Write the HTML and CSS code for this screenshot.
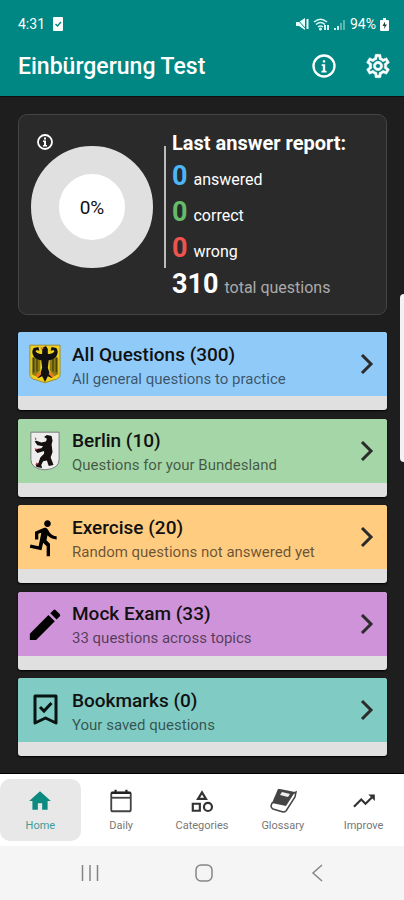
FILE: index.html
```html
<!DOCTYPE html>
<html lang="en">
<head>
<meta charset="utf-8">
<meta name="viewport" content="width=device-width, initial-scale=1">
<title>Einbürgerung Test</title>
<link rel="stylesheet" href="styles.css">
</head>
<body>
<div class="app">
  <header class="top">
    <div class="status">
      <span class="clock">4:31</span>
      <svg width="10" height="14" viewBox="0 0 10 14"><rect width="10" height="14" rx="1" fill="#fff"/><path d="M2.500 7l2 2 3.500-4" fill="none" stroke="#008783" stroke-width="1.500"/></svg>
      <span class="status-icons">
        <svg width="13" height="12" viewBox="0 0 13 12" fill="#e8ffff"><path d="M0 4h3l6-4v12L3 8H0zM10.500 1h2v10h-2z"/><path d="M1 1l9 10" stroke="#008783"/></svg>
        <svg width="17" height="13" viewBox="0 0 17 13" fill="none" stroke="#d5f5f3" stroke-width="1.500"><path d="M1 4q6.500-5.500 13 0M3 6.500q4.500-4 9 0M5 9q2.500-2 5 0"/><path d="M12 7v5M15 7v5" stroke-width="2"/><circle cx="7.500" cy="11" r=".8"/></svg>
        <svg width="12" height="11" viewBox="0 0 12 11" fill="#c9efed"><path d="M0 9h2v2H0zM3 7h2v4H3z"/><path d="M6 4h2v7H6zM9 1h2v10H9z" opacity=".45"/></svg>
        <span class="battery">94%</span>
        <svg width="9" height="13" viewBox="0 0 9 13"><path d="M3 0h3v2h2q1 0 1 1v9q0 1-1 1H1q-1 0-1-1V3q0-1 1-1h2z" fill="#fff"/><path d="M5 3.500L2.500 8h2L4 11l3-4.500H5z" fill="#24403f"/></svg>
      </span>
    </div>
    <div class="bar">
      <h1>Einbürgerung Test</h1>
      <button class="icon-btn" aria-label="Information"><svg width="28" height="28" viewBox="0 0 24 24" fill="#fff"><path d="M11 7h2v2h-2zM10 10.500h3V16h1.200v1.500H9.800V16H11v-4h-1zM12 2a10 10 0 100 20 10 10 0 000-20zm0 18a8 8 0 110-16 8 8 0 010 16z"/></svg></button>
      <button class="icon-btn" aria-label="Settings"><svg width="28" height="28" viewBox="0 0 24 24" fill="#fff" stroke="#fff" stroke-width=".4"><path d="M19.430 12.980c.04-.32.07-.64.07-.98s-.03-.66-.07-.98l2.110-1.650c.19-.15.24-.42.12-.64l-2-3.460c-.12-.22-.39-.3-.61-.22l-2.490 1c-.52-.4-1.080-.73-1.690-.98l-.38-2.650C14.460 2.180 14.250 2 14 2h-4c-.25 0-.46.18-.49.42l-.38 2.650c-.61.25-1.170.59-1.690.98l-2.490-1c-.23-.09-.49 0-.61.22l-2 3.460c-.13.22-.07.49.12.64l2.110 1.650c-.04.32-.07.65-.07.98s.03.66.07.98l-2.110 1.650c-.19.15-.24.42-.12.64l2 3.460c.12.22.39.3.61.22l2.490-1c.52.4 1.080.73 1.690.98l.38 2.650c.03.24.24.42.49.42h4c.25 0 .46-.18.49-.42l.38-2.650c.61-.25 1.170-.59 1.690-.98l2.490 1c.23.09.49 0 .61-.22l2-3.460c.12-.22.07-.49-.12-.64zm-1.980-1.710c.04.31.05.52.05.73s-.02.43-.05.73l-.14 1.130.89.7 1.080.84-.7 1.210-1.270-.51-1.040-.42-.9.68c-.43.32-.84.56-1.250.73l-1.060.43-.16 1.130-.2 1.350h-1.400l-.19-1.350-.16-1.130-1.060-.43c-.43-.18-.83-.41-1.230-.71l-.91-.7-1.060.43-1.270.51-.7-1.210 1.080-.84.89-.7-.14-1.130c-.03-.31-.05-.54-.05-.74s.02-.43.05-.73l.14-1.130-.89-.7-1.080-.84.7-1.210 1.270.51 1.040.42.9-.68c.43-.32.84-.56 1.250-.73l1.060-.43.16-1.130.2-1.350h1.390l.19 1.350.16 1.130 1.060.43c.43.18.83.41 1.230.71l.91.7 1.060-.43 1.270-.51.7 1.210-1.070.85-.89.7zM12 8a4 4 0 100 8 4 4 0 000-8zm0 6a2 2 0 110-4 2 2 0 010 4z"/></svg></button>
    </div>
  </header>

  <main>
    <section class="report">
      <div class="progress">
        <button class="hint" aria-label="About progress"><svg width="18" height="18" viewBox="0 0 18 18"><circle cx="9" cy="9" r="7" fill="none" stroke="#fff" stroke-width="1.800"/><path d="M8 4.500h2v2H8zM7 7.500h3V12h1v1.500H7V12h1V9H7z" fill="#fff"/></svg></button>
        <div class="donut"><span>0%</span></div>
      </div>
      <div class="stats">
        <h2>Last answer report:</h2>
        <p><b class="blue">0</b> answered</p>
        <p><b class="green">0</b> correct</p>
        <p><b class="red">0</b> wrong</p>
        <p class="total"><b>310</b> total questions</p>
      </div>
    </section>

    <nav class="list" aria-label="Question sets">
      <a href="#all" class="item">
        <span class="body sky">
          <svg class="lead" viewBox="0 0 34 42"><path d="M1 1h32v31q0 5-7 6l-9 3-9-3q-7-1-7-6z" fill="#efd01f" stroke="#9a8a2a"/><path d="M3 14h9v14l-5 6-4-2zM31 14h-9v14l5 6 4-2z" fill="#8d7d16"/><path d="M5 14v16M8.500 15v14M25.500 15v14M29 14v16" stroke="#4c430b" stroke-width="1.500"/><path d="M14 4l4-2 2 3v5q4 1 7-2l-1-2-3 1 1-4 5 1q3 4 0 9-4 4-8 4l-1 8 2 6 4 3-2 2-4-2-3 6-3-6-4 2-2-2 4-3 2-6-1-8q-4 0-8-4-3-5 0-9l5-1 1 4-3-1-1 2q3 3 7 2V6z" fill="#111"/><path d="M12 3l4 1-3 2zM7 33l5-4 1 3-4 4zM27 33l-5-4-1 3 4 4z" fill="#ee7a1b"/></svg>
          <span class="text"><strong>All Questions (300)</strong><small>All general questions to practice</small></span>
          <svg class="chev" viewBox="0 0 14 20"><path d="M2 1l9 9-9 9"/></svg>
        </span>
      </a>
      <a href="#berlin" class="item">
        <span class="body mint">
          <svg class="lead" viewBox="0 0 34 42"><path d="M2 1h30v29q0 10-15 11Q2 40 2 30z" fill="#eee" stroke="#777"/><path d="M16 6l3-2 5 1 1 5-1 4 1 8-2 6 2 5 1 3-5 1-2-6-4 1-2 4 1 3-6-1-1-3 3-1 2-6 4-4v-3l-7 2-3-3 2-1 5-1 2-2-6-1-3-4 2-1 5 2 5-1 1-3z" fill="#15100f"/><path d="M6 6l2 2-1 2zM6 18l3 1-2 2zM8 33l2 2-3 1z" fill="#cb332e"/></svg>
          <span class="text"><strong>Berlin (10)</strong><small>Questions for your Bundesland</small></span>
          <svg class="chev" viewBox="0 0 14 20"><path d="M2 1l9 9-9 9"/></svg>
        </span>
      </a>
      <a href="#exercise" class="item">
        <span class="body amber">
          <svg class="lead" viewBox="3 -.5 18 24"><path d="M13.490 5.480c1.100 0 2-.9 2-2s-.9-2-2-2-2 .9-2 2 .9 2 2 2zm-3.600 13.900l1-4.400 2.100 2v6h2v-7.500l-2.100-2 .6-3c1.300 1.500 3.300 2.500 5.500 2.500v-2c-1.900 0-3.500-1-4.300-2.400l-1-1.600c-.4-.6-1-1-1.700-1-.3 0-.5.1-.8.1l-5.200 2.200v4.700h2v-3.400l1.800-.7-1.600 8.100-4.900-1-.4 2 7 1.400z"/></svg>
          <span class="text"><strong>Exercise (20)</strong><small>Random questions not answered yet</small></span>
          <svg class="chev" viewBox="0 0 14 20"><path d="M2 1l9 9-9 9"/></svg>
        </span>
      </a>
      <a href="#mock" class="item">
        <span class="body violet">
          <svg class="lead" viewBox="2.500 2 19 19"><path d="M3 17.250V21h3.750L17.810 9.940l-3.750-3.750L3 17.250zM20.710 7.040a1 1 0 000-1.410l-2.340-2.340a1 1 0 00-1.410 0l-1.830 1.830 3.750 3.750 1.830-1.830z"/></svg>
          <span class="text"><strong>Mock Exam (33)</strong><small>33 questions across topics</small></span>
          <svg class="chev" viewBox="0 0 14 20"><path d="M2 1l9 9-9 9"/></svg>
        </span>
      </a>
      <a href="#bookmarks" class="item">
        <span class="body teal">
          <svg class="lead" viewBox="0 0 32 40"><path d="M6 6h21v27l-10.500-5L6 33z" fill="none" stroke="#071412" stroke-width="3" stroke-linejoin="round"/><path d="M11 17l4 4 7.500-8" fill="none" stroke="#071412" stroke-width="3"/></svg>
          <span class="text"><strong>Bookmarks (0)</strong><small>Your saved questions</small></span>
          <svg class="chev" viewBox="0 0 14 20"><path d="M2 1l9 9-9 9"/></svg>
        </span>
      </a>
    </nav>
    <span class="edge-handle"></span>
  </main>

  <nav class="tabs" aria-label="Main">
    <a href="#home" class="active"><svg width="26" height="26" viewBox="0 0 24 24" fill="#0b8a80"><path d="M10 20v-6h4v6h5v-8h3L12 3 2 12h3v8z"/></svg>Home</a>
    <a href="#daily"><svg width="26" height="26" viewBox="0 0 24 24" fill="none" stroke="#444" stroke-width="1.700"><rect x="3" y="4" width="18" height="17.500" rx="1.500"/><path d="M3 9h18"/><path d="M3 4.500h18M7 1.500v4M17 1.500v4" stroke="#222" stroke-width="2"/></svg>Daily</a>
    <a href="#categories"><svg width="26" height="26" viewBox="0 0 24 24" fill="none" stroke="#333" stroke-width="2"><path d="M12 4l3.700 6H8.300z"/><path d="M3.500 14.500h6.500v6.500H3.500z"/><circle cx="17.500" cy="17.500" r="3.700"/></svg>Categories</a>
    <a href="#glossary"><svg width="30" height="26" viewBox="0 0 30 26"><path d="M4 15l-1 3q0 2 2 3l10 3q2 0 3-1l9-14 1-5z" fill="#fff" stroke="#444" stroke-width="1.500"/><path d="M10 1h2l15 3-9 14-14-3z" fill="#444"/><path d="M14 4l8 2-2 3-8-2z" fill="#eee"/></svg>Glossary</a>
    <a href="#improve"><svg width="26" height="26" viewBox="0 0 24 24" fill="#333"><path d="M16 6l2.290 2.290-4.880 4.880-4-4L2 16.590 3.410 18l6-6 4 4 6.300-6.290L22 12V6z"/></svg>Improve</a>
  </nav>

  <div class="system">
    <button aria-label="Recent apps"><svg width="18" height="18" viewBox="0 0 18 18"><path d="M1.500 1v16M9 1v16M16.500 1v16"/></svg></button>
    <button aria-label="Home screen"><svg width="18" height="18" viewBox="0 0 18 18"><rect x="1" y="1" width="16" height="16" rx="5"/></svg></button>
    <button aria-label="Back"><svg width="18" height="18" viewBox="0 0 18 18"><path d="M13 1L4 9l9 8"/></svg></button>
  </div>
</div>
</body>
</html>
```
FILE: styles.css
```css
* { box-sizing: border-box; }

body {
  margin: 0;
  background: #1e1e1e;
  font-family: Roboto, "Liberation Sans", sans-serif;
}

h1, h2, p { margin: 0; }
a { color: inherit; text-decoration: none; }
button { padding: 0; border: 0; background: none; }
svg { display: block; flex: none; }

.app {
  min-height: 100vh;
  display: flex;
  flex-direction: column;
}

.top {
  background: #008783;
  color: #fff;
  border-bottom: 1px solid #101010;
}

.status {
  height: 40px;
  padding: 8px 15px 0 18px;
  display: flex;
  align-items: center;
  gap: 8px;
  font-size: 14px;
  font-weight: 400;
}

.status-icons {
  margin-left: auto;
  display: flex;
  align-items: center;
  gap: 4px;
}

.bar {
  height: 56px;
  padding: 0 12px 4px 18px;
  display: flex;
  align-items: center;
  gap: 26px;
}

.bar h1 {
  flex: 1;
  font-size: 23px;
  font-weight: 500;
  white-space: nowrap;
}

main {
  position: relative;
  flex: 1;
  display: flex;
  flex-direction: column;
  gap: 17px;
  padding: 17px 17px 17px 18px;
  border-bottom: 1px solid #000;
}

.report {
  display: flex;
  min-height: 201px;
  padding: 12px;
  border: 1px solid #444;
  border-radius: 9px;
  background: #2a2a2a;
  color: #fff;
}

.progress {
  position: relative;
  display: flex;
  align-items: center;
  height: 122px;
  margin-top: 19px;
  padding-right: 11px;
  border-right: 2px solid #bbb;
}

.donut {
  width: 122px;
  height: 122px;
  border: 28px solid #e0e0e0;
  border-radius: 50%;
  background: #fff;
  color: #111;
  font-size: 19px;
  display: grid;
  place-items: center;
}

.hint {
  position: absolute;
  left: 5px;
  top: -13px;
}

.stats {
  padding: 3px 0 0 6px;
  white-space: nowrap;
}

.stats h2 {
  margin-bottom: 2px;
  font-size: 20px;
  line-height: 26px;
  font-weight: 700;
}

.stats p {
  height: 36px;
  line-height: 36px;
  font-size: 16px;
}

.stats b {
  font-size: 27px;
  font-weight: 700;
  margin-right: 2px;
}

.stats .total { color: #aaa; }
.total b { color: #fff; }
.blue { color: #4db5f5; }
.green { color: #66bb6a; }
.red { color: #ef5350; }

.list {
  flex: 1;
  display: flex;
  flex-direction: column;
  justify-content: space-between;
  gap: 8px;
}

.item {
  overflow: hidden;
  padding-bottom: 14px;
  border-radius: 3px;
  background: #e0e0e0;
  box-shadow: 0 1px 2px #000;
}

.body {
  display: flex;
  align-items: center;
  height: 64px;
  padding: 0 13px 0 11px;
}

.sky { background: #90caf9; }
.mint { background: #a5d6a7; }
.amber { background: #ffcc80; }
.violet { background: #ce93d8; }
.teal { background: #80cbc4; }

.lead {
  width: 32px;
  height: 40px;
}

.text {
  flex: 1;
  margin-left: 11px;
  padding-top: 3px;
  display: flex;
  flex-direction: column;
  white-space: nowrap;
  color: #111;
}

.text strong {
  font-size: 19px;
  line-height: 26px;
  font-weight: 500;
}

.text small {
  font-size: 15px;
  line-height: 22px;
  color: rgba(0, 0, 0, 0.6);
}

.chev {
  width: 14px;
  height: 20px;
  fill: none;
  stroke: #2b2b2b;
  stroke-width: 3;
}

.edge-handle {
  position: absolute;
  right: 0;
  top: 197px;
  width: 4px;
  height: 168px;
  border-radius: 4px 0 0 4px;
  background: #f2f2f2;
}

.tabs {
  display: grid;
  grid-template-columns: repeat(5, 1fr);
  height: 72px;
  padding: 5px 0;
  background: #fff;
}

.tabs a {
  display: flex;
  flex-direction: column;
  align-items: center;
  gap: 4px;
  padding-top: 9px;
  border-radius: 10px;
  font-size: 11px;
  line-height: 16px;
  color: #777;
}

.tabs .active {
  background: #e8e8e8;
  color: #3f9d95;
}

.system {
  display: flex;
  justify-content: space-between;
  align-items: center;
  height: 54px;
  padding: 0 19% 0 20%;
  background: #f5f5f5;
}

.system svg {
  fill: none;
  stroke: #858585;
  stroke-width: 1.5;
}
```
